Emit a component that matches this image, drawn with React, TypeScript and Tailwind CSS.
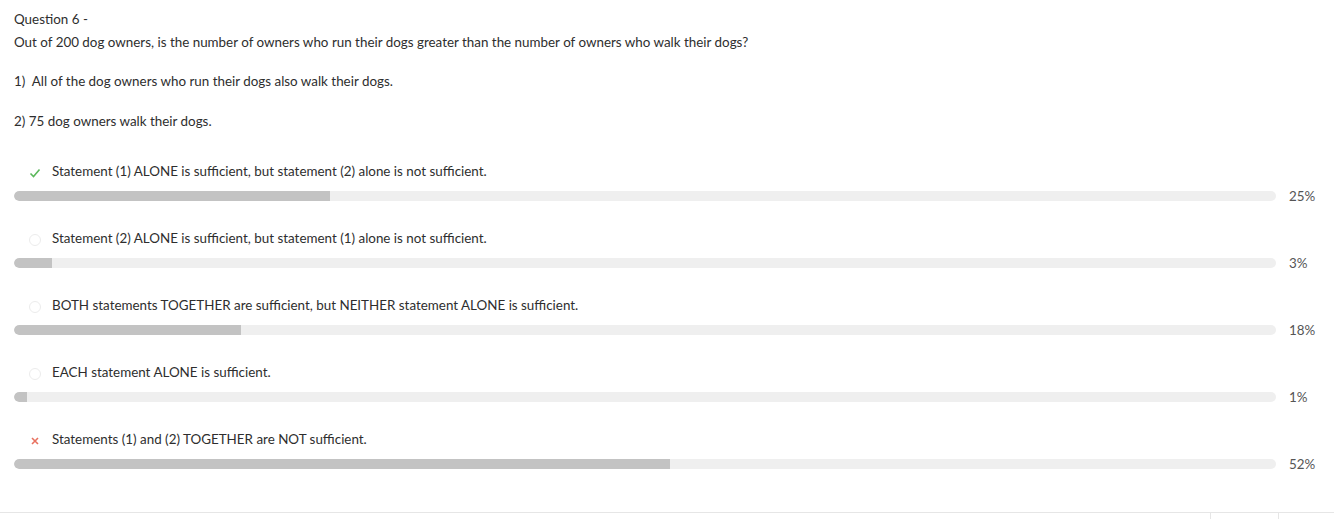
const OPTIONS = [
  { text: "Statement (1) ALONE is sufficient, but statement (2) alone is not sufficient.", pct: 25, mark: "correct" },
  { text: "Statement (2) ALONE is sufficient, but statement (1) alone is not sufficient.", pct: 3, mark: "none" },
  { text: "BOTH statements TOGETHER are sufficient, but NEITHER statement ALONE is sufficient.", pct: 18, mark: "none" },
  { text: "EACH statement ALONE is sufficient.", pct: 1, mark: "none" },
  { text: "Statements (1) and (2) TOGETHER are NOT sufficient.", pct: 52, mark: "wrong" },
];

function Mark({ mark }: { mark: string }) {
  if (mark === "correct") {
    return (
      <svg width="12" height="12" viewBox="0 0 12 12">
        <path d="M1.5 6.5 L4.5 9.5 L10.5 2.5" fill="none" stroke="#5cb85c" strokeWidth="1.6" />
      </svg>
    );
  }
  if (mark === "wrong") {
    return (
      <svg width="12" height="12" viewBox="0 0 12 12">
        <path d="M3 3 L9 9 M9 3 L3 9" fill="none" stroke="#e8715f" strokeWidth="1.6" />
      </svg>
    );
  }
  return <div className="w-[12px] h-[12px] rounded-full border border-[#ececec]" />;
}

export default function App() {
  return (
    <div className="w-[1334px] h-[519px] bg-white overflow-hidden flex flex-col text-[13.4px] text-[#2e2e2e] font-['Lato','Open_Sans',sans-serif]">
      <div className="flex-1 px-[14px] pt-[9px]">
        <p className="leading-[20px]">Question 6 -</p>
        <p className="leading-[20px] mt-[3px]">
          Out of 200 dog owners, is the number of owners who run their dogs greater than the number of owners who walk their dogs?
        </p>
        <p className="leading-[20px] mt-[19px]">1)&nbsp; All of the dog owners who run their dogs also walk their dogs.</p>
        <p className="leading-[20px] mt-[20px]">2) 75 dog owners walk their dogs.</p>

        <div className="mt-[30px] flex flex-col gap-[27px]">
          {OPTIONS.map((o) => (
            <div key={o.text} className="flex flex-col">
              <div className="flex items-center h-[20px] pl-[15px] gap-[11px]">
                <div className="mt-[3px]">
                  <Mark mark={o.mark} />
                </div>
                <span className="leading-[20px]">{o.text}</span>
              </div>
              <div className="flex items-center mt-[10px] h-[10px]">
                <div className="w-[1262px] h-[10px] rounded-full bg-[#efefef] overflow-hidden">
                  <div className="h-full bg-[#c3c3c3] rounded-l-full" style={{ width: `${o.pct}%` }} />
                </div>
                <span className="ml-[13px] text-[#555] leading-[20px]">{o.pct}%</span>
              </div>
            </div>
          ))}
        </div>
      </div>
      <div className="h-[7px] border-t border-[#e6e6e6] flex justify-end">
        <div className="w-[68px] border-l border-[#e6e6e6]" />
        <div className="w-[56px] border-l border-[#e6e6e6]" />
      </div>
    </div>
  );
}
